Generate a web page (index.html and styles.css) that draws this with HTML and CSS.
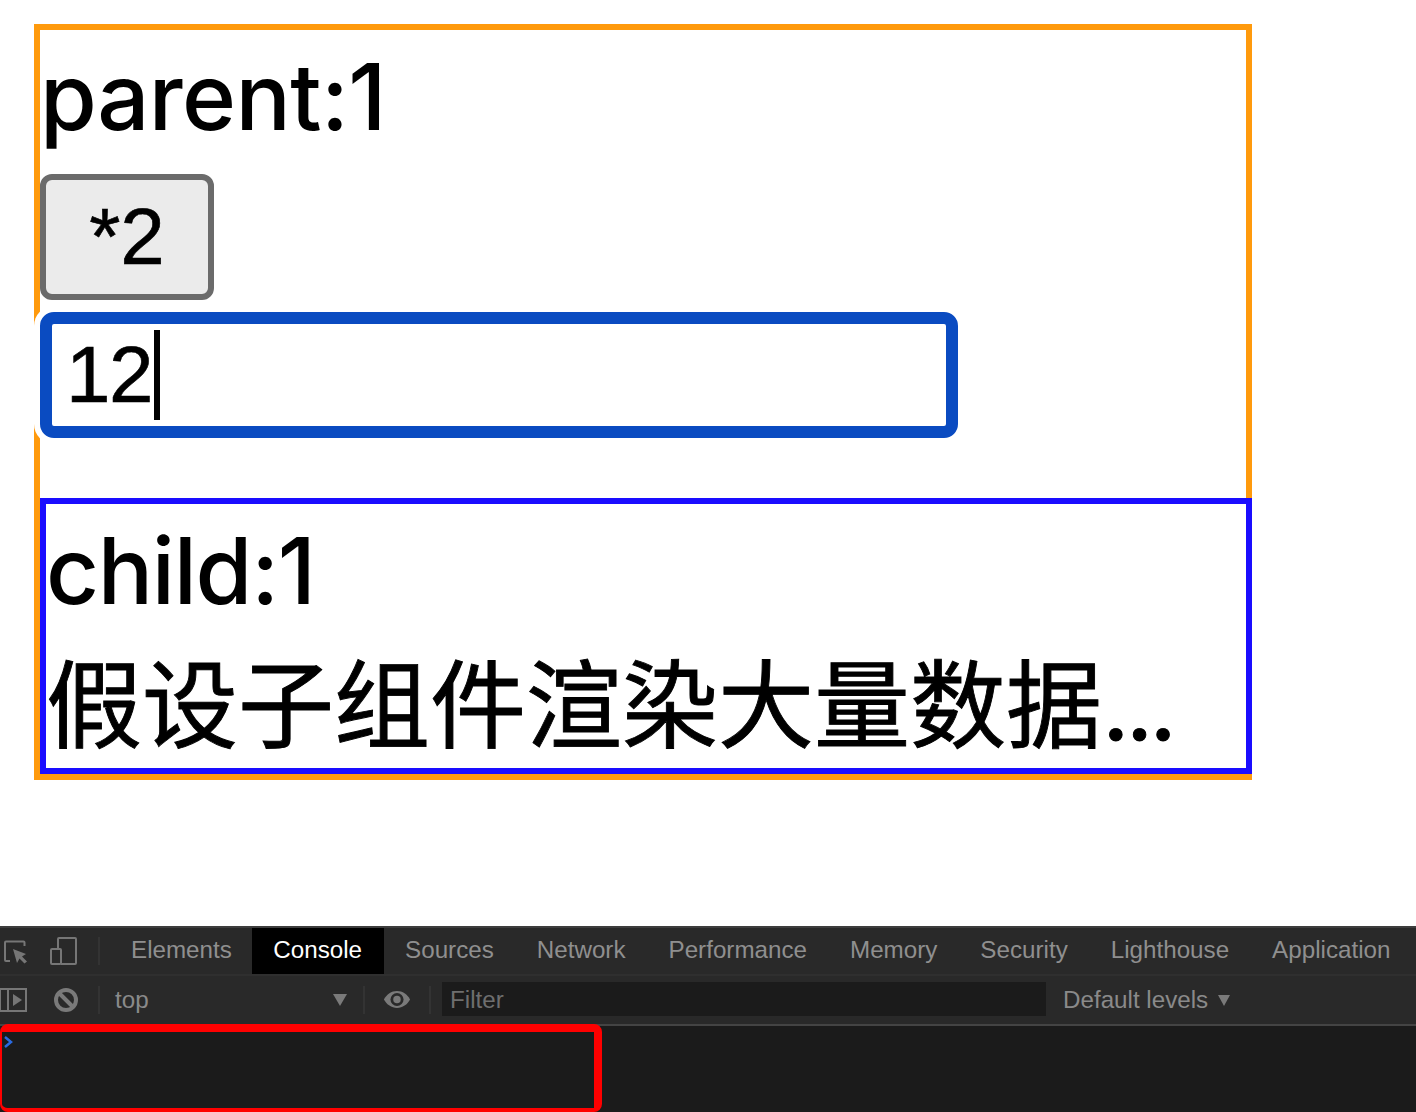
FILE: index.html
```html
<!DOCTYPE html>
<html lang="zh">
<head>
<meta charset="utf-8">
<title>Demo</title>
<link rel="stylesheet" href="styles.css">
</head>
<body>
<main class="page">
  <section class="parent">
    <div class="parent-line">parent:1</div>
    <button class="btn" type="button">*2</button>
    <div class="field"><span class="field-text">12</span><span class="caret"></span></div>
    <section class="child">
      <div class="child-line latin">child:1</div>
      <div class="child-line cjk">假设子组件渲染大量数据<span class="dots">...</span></div>
    </section>
  </section>
</main>
<footer class="devtools">
  <nav class="tabs">
    <span class="icon-slot">
      <svg class="ico" width="26" height="26" viewBox="0 0 26 26" fill="none"><path d="M21.500 8V4.500a1 1 0 0 0-1-1H3a1 1 0 0 0-1 1V22a1 1 0 0 0 1 1H7" stroke="#767676" stroke-width="2"/><path d="M10 11L23 16L19 18.500L24 23.500L21.500 25.500L16.500 20.500L14 25z" fill="#767676"/></svg>
      <svg class="ico" width="30" height="30" viewBox="0 0 30 30" fill="none"><path d="M10 12V3a1 1 0 0 1 1-1h16a1 1 0 0 1 1 1v24a1 1 0 0 1-1 1H13" stroke="#767676" stroke-width="2"/><rect x="3" y="13" width="10" height="15" rx="1" stroke="#767676" stroke-width="2"/></svg>
    </span>
    <span class="sep"></span>
    <a class="tab first">Elements</a>
    <a class="tab active">Console</a>
    <a class="tab">Sources</a>
    <a class="tab">Network</a>
    <a class="tab">Performance</a>
    <a class="tab">Memory</a>
    <a class="tab">Security</a>
    <a class="tab">Lighthouse</a>
    <a class="tab">Application</a>
  </nav>
  <div class="toolbar">
    <svg class="sidebar-ico" width="28" height="24" viewBox="0 0 28 24" fill="none"><rect x="0" y="1" width="26" height="22" stroke="#767676" stroke-width="2"/><path d="M8 1v22" stroke="#767676" stroke-width="2"/><path d="M13 6l9 6-9 6z" fill="#767676"/></svg>
    <svg class="clear-ico" width="24" height="24" viewBox="0 0 24 24" fill="none"><circle cx="12" cy="12" r="10" stroke="#7a7a7a" stroke-width="4"/><path d="M5 5l14 14" stroke="#7a7a7a" stroke-width="4"/></svg>
    <span class="sep gap-left"></span>
    <span class="context">top<span class="arrow"></span></span>
    <span class="sep"></span>
    <svg class="eye-ico" width="28" height="19" viewBox="0 0 30 20"><path d="M15 1C9 1 4 4.500 1 10c3 5.500 8 9 14 9s11-3.500 14-9c-3-5.500-8-9-14-9z" fill="#7a7a7a"/><circle cx="15" cy="10" r="7" fill="#292929"/><circle cx="15" cy="10" r="4" fill="#7a7a7a"/></svg>
    <span class="sep"></span>
    <span class="filter">Filter</span>
    <span class="levels">Default levels<span class="arrow small"></span></span>
  </div>
  <div class="console">
    <div class="highlight">
      <svg class="prompt" width="10" height="14" viewBox="0 0 10 14" fill="none"><path d="M2 2l6 5-6 5" stroke="#2a6ae0" stroke-width="2.500"/></svg>
    </div>
  </div>
</footer>
</body>
</html>
```
FILE: styles.css
```css
* { box-sizing: border-box; }
html, body { margin: 0; padding: 0; background: #fff; }
body {
  width: 1416px;
  height: 1112px;
  display: flex;
  flex-direction: column;
  overflow: hidden;
  font-family: "Inter", "Noto Sans CJK SC", sans-serif;
  color: #000;
}
.page { height: 926px; padding: 24px 0 0 34px; }
.parent {
  width: 1218px;
  height: 756px;
  border: 6px solid #ff9a0d;
  display: flex;
  flex-direction: column;
  align-items: flex-start;
}
.parent-line {
  font-size: 92px;
  font-weight: 450;
  letter-spacing: -0.6px;
  line-height: 134px;
  height: 144px;
}
.btn {
  width: 174px;
  height: 126px;
  margin: 0;
  padding: 0;
  border: 6px solid #6b6b6b;
  border-radius: 12px;
  background: #ebebeb;
  font-family: "Liberation Sans", sans-serif;
  font-size: 80px;
  color: #000;
  -webkit-text-stroke: 0.6px #000;
}
.field {
  width: 918px;
  height: 126px;
  margin-top: 12px;
  padding: 0 14px;
  border: 12px solid #0a4bc1;
  border-radius: 14px;
  box-shadow: 0 0 0 6px #fff;
  background: #fff;
  display: flex;
  align-items: center;
  font-family: "Liberation Sans", sans-serif;
  font-size: 80px;
  -webkit-text-stroke: 0.6px #000;
}
.field-text { letter-spacing: -1.5px; }
.caret { width: 6px; height: 90px; background: #000; margin-left: 2px; }
.child {
  width: 1212px;
  height: 276px;
  margin-top: 60px;
  border: 6px solid #1a0dff;
}
.child-line {
  font-size: 92px;
  font-weight: 450;
  line-height: 134px;
  white-space: nowrap;
}
.child-line.latin { letter-spacing: -1.3px; }
.child-line.cjk { font-size: 96px; font-weight: 400; -webkit-text-stroke: 0.9px #000; }
.dots { letter-spacing: -4px; }

.devtools {
  height: 186px;
  background: #1b1b1b;
  font-family: "Liberation Sans", sans-serif;
  font-size: 24.2px;
  color: #8a8a8a;
  display: flex;
  flex-direction: column;
}
.tabs {
  height: 48px;
  border-top: 2px solid #3d3d3d;
  background: #292929;
  display: flex;
  align-items: center;
}
.icon-slot { display: flex; align-items: center; gap: 19px; padding-left: 3px; width: 98px; }
.sep { width: 2px; height: 28px; background: #333; flex: none; }
.tab {
  height: 46px;
  display: flex;
  align-items: center;
  padding: 0 21.5px 2px;
  color: #8f8f8f;
}
.tab.first { margin-left: 9.500px; padding-right: 20px; }
.tab.active { background: #000; color: #fff; }
.toolbar {
  height: 50px;
  background: #292929;
  border-top: 2px solid #2f2f2f;
  display: flex;
  align-items: center;
}
.clear-ico { margin-left: 26px; }
.sep.gap-left { margin-left: 20px; }
.context { width: 263px; display: flex; justify-content: space-between; align-items: center; padding: 0 16px 0 15px; }
.arrow { width: 0; height: 0; border-left: 7px solid transparent; border-right: 7px solid transparent; border-top: 12px solid #7a7a7a; }
.arrow.small { margin-left: 10px; border-left-width: 6px; border-right-width: 6px; border-top-width: 11px; }
.eye-ico { margin: 0 18px 2px; }
.filter {
  width: 604px;
  height: 34px;
  margin-left: 11px;
  margin-bottom: 2px;
  padding: 2px 0 0 8px;
  background: #1b1b1b;
  display: flex;
  align-items: center;
  color: #6e6e6e;
}
.levels { margin-left: 17px; display: flex; align-items: center; }
.console { flex: 1; border-top: 2px solid #444; position: relative; }
.highlight {
  position: absolute;
  left: 0;
  top: -2px;
  width: 602px;
  height: 88px;
  border: solid #ff0000;
  border-width: 8px 8px 4px 2px;
  border-radius: 8px;
}
.prompt { position: absolute; left: 1px; top: 3px; }
```
